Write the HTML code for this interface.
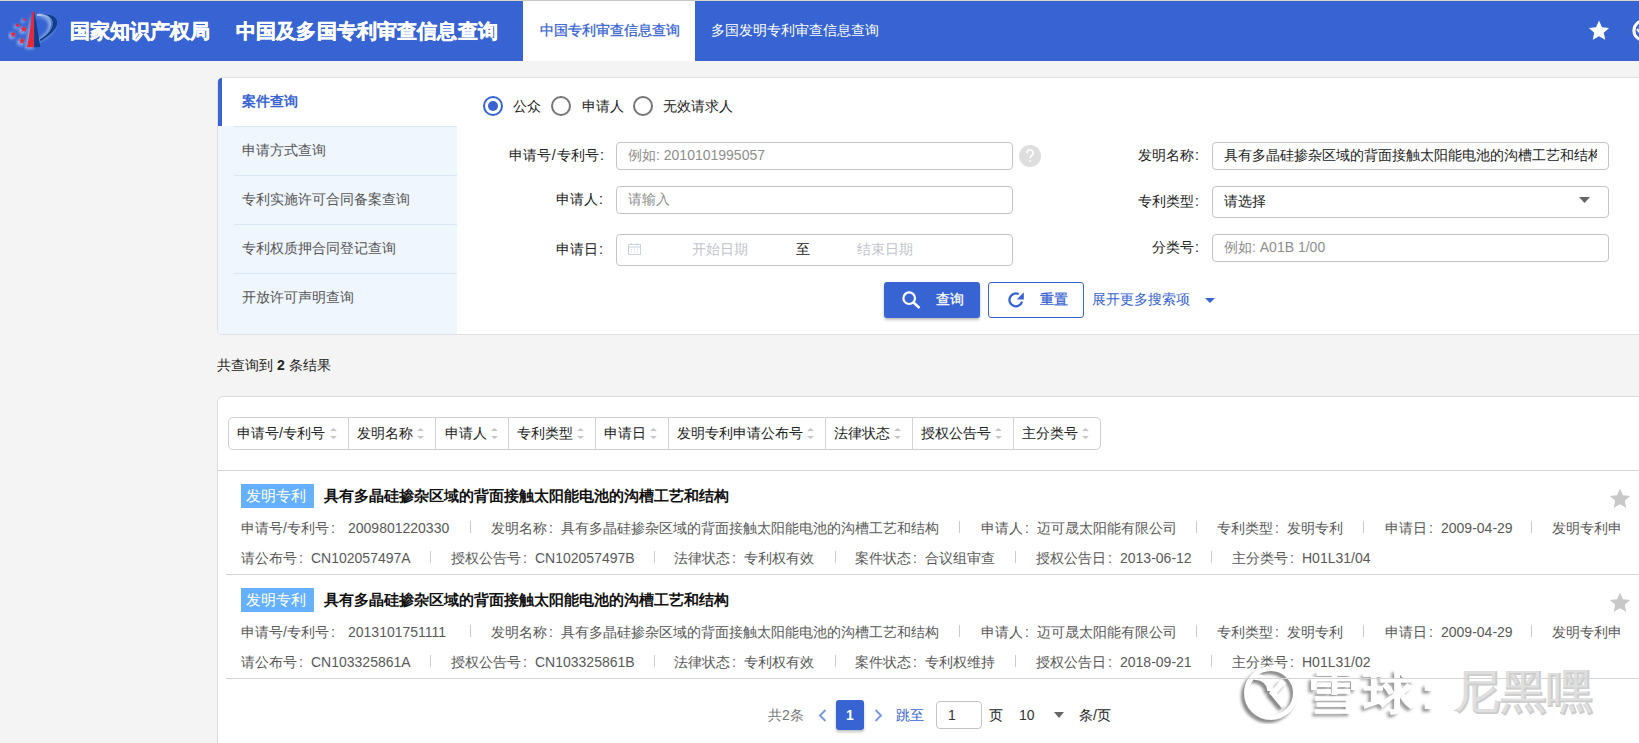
<!DOCTYPE html>
<html><head><meta charset="utf-8">
<style>
*{box-sizing:border-box;margin:0;padding:0}
html,body{width:1639px;height:743px;overflow:hidden}
body{position:relative;background:#f4f4f4;font-family:"Liberation Sans",sans-serif;color:#333;font-size:14px}
.a{position:absolute;white-space:nowrap}
.topline{left:0;top:0;width:1639px;height:1px;background:#d9d5cb}
.hdr{left:0;top:1px;width:1639px;height:60px;background:#3764d2}
.htitle{color:#fff;font-size:20px;font-weight:bold;line-height:20px;-webkit-text-stroke:0.45px #fff}
.tab1{left:523px;top:1px;width:172px;height:60px;background:#fff}
.tabt{font-size:14px;line-height:20px}
.panel{left:217px;top:77px;width:1440px;height:258px;background:#fff;border:1px solid #e0e0e0;border-radius:5px;overflow:hidden}
.nav{left:0;top:48px;width:239px;height:222px;background:#eff6fe}
.navact{left:0;top:0;width:239px;height:48px;background:#fff}
.navbar{left:0;top:0;width:4px;height:48px;background:#3764d2}
.sep{height:1px;background:#d9e6f8}
.navt{font-size:14px;line-height:20px;color:#555}
.lbl{font-size:14px;line-height:20px;color:#222;text-align:right}
.inp{border:1px solid #c4c4c4;border-radius:4px;background:#fff}
.ph{font-size:14px;line-height:20px;color:#8e8e8e}
.radio{width:20px;height:20px;border-radius:50%;border:2px solid #757575}
.radio.on{border-color:#3764d2}
.radio.on:after{content:"";position:absolute;left:3px;top:3px;width:10px;height:10px;border-radius:50%;background:#3764d2}
.res{left:217px;top:396px;width:1440px;height:400px;background:#fff;border:1px solid #dcdcdc;border-radius:6px}
.sg{left:228px;top:417px;width:873px;height:33px;border:1px solid #cfcfcf;border-radius:5px;background:#fff}
.sd{top:418px;width:1px;height:31px;background:#d4d4d4}
.st{top:423px;font-size:14px;line-height:20px;color:#222}
.tag{width:73px;height:24px;background:#66b1ff;color:#fff;font-size:15px;line-height:24px;padding-left:5px}
.ttl{font-size:15px;font-weight:bold;line-height:20px;color:#111}
.info{font-size:14px;line-height:20px;color:#595959}
.vs{width:1px;height:12px;background:#cacaca}
.hl{height:1px;background:#d4d4d4;z-index:2}
.wm{top:664px;font-size:46px;transform:scaleX(1.12);transform-origin:0 0;line-height:56px;color:#fff;font-weight:bold;-webkit-text-stroke:0.6px #fff;text-shadow:-3px 3px 3px rgba(0,0,0,.42)}
.wm2{top:664px;font-size:46px;line-height:56px;color:#cdcdcd;font-weight:bold;-webkit-text-stroke:0.5px #cdcdcd}
.wm3{top:663px;font-size:46px;line-height:56px;color:rgba(255,255,255,.4);font-weight:normal}
.c{font-style:normal;display:inline-block;width:14px;padding-left:2px}
</style></head>
<body>
<div class="a topline"></div>
<div class="a" style="left:523px;top:0;width:172px;height:1px;background:#c6c8c8"></div>
<div class="a hdr"></div>
<!-- logo -->
<svg class="a" style="left:8px;top:10px" width="54" height="42" viewBox="0 0 54 42">
  <defs><filter id="gl" x="-50%" y="-50%" width="200%" height="200%"><feGaussianBlur stdDeviation="1.4"/></filter>
  <linearGradient id="pg" x1="0" y1="0" x2="1" y2="0.3"><stop offset="0" stop-color="#b8cdf5"/><stop offset="0.55" stop-color="#8eaee8"/><stop offset="1" stop-color="#0f3d8a"/></linearGradient></defs>
  <g opacity="0.75" filter="url(#gl)" fill="#a9c4f6" transform="translate(-1.5,1.5)">
    <path d="M24.5 2 L27 37.5 L18.5 37.5 Z"/>
    <path d="M28 5 C40 2 52 8 48 17 C45 24 37 28 32 31 L31 28 C36 25 42 20 42 14 C42 8 36 5 29 6 Z"/>
    <circle cx="16.4" cy="9.5" r="2"/><circle cx="9.4" cy="15.3" r="2.3"/><circle cx="15.8" cy="18.9" r="3.5"/><circle cx="5.2" cy="24.3" r="3.2"/><circle cx="14" cy="30.7" r="3.5"/>
  </g>
  <path d="M28.2 4.2 C38 2.5 50 5.5 49 13.5 C48 21 39 27 32.5 31.5 L31.6 29 C36 26 42.5 21 43 14.5 C43.5 8.5 37 5.3 29.5 6 Z" fill="url(#pg)"/>
  <path d="M32.5 31.5 C39 27 48 21 49 13.5 C50 6 41 3.5 33 4 C41 5 46 9 45 15 C44 21 37 26.5 32 29 Z" fill="#0f3d8a"/>
  <path d="M24.3 1.8 L26.3 1.8 L26.1 37.3 L19 37.3 C21.5 25 23 12 24.3 1.8 Z" fill="#e5293b"/>
  <path d="M26.3 1.5 C28.3 12 30.5 25 32.2 37 L26.1 37.3 Z" fill="#0f3d8a"/>
  <g fill="#e5293b">
    <circle cx="16.4" cy="9.5" r="1.3"/>
    <circle cx="9.4" cy="15.3" r="1.7"/>
    <path d="M15.8 15.3 l1.05 2.35 2.55 .25 -1.95 1.7 .6 2.5 -2.25 -1.35 -2.25 1.35 .6 -2.5 -1.95 -1.7 2.55 -.25z"/>
    <path d="M5.2 21.2 l.9 2.05 2.25 .2 -1.7 1.5 .5 2.2 -1.95 -1.15 -1.95 1.15 .5 -2.2 -1.7 -1.5 2.25 -.2z"/>
    <path d="M14 27.3 l1 2.2 2.4 .22 -1.8 1.6 .55 2.35 -2.15 -1.25 -2.15 1.25 .55 -2.35 -1.8 -1.6 2.4 -.22z"/>
  </g>
</svg>
<div class="a htitle" style="left:70px;top:21px">国家知识产权局</div>
<div class="a htitle" style="left:236px;top:21px;letter-spacing:.15px">中国及多国专利审查信息查询</div>
<div class="a tab1"></div>
<div class="a tabt" style="left:540px;top:20px;color:#3764d2;-webkit-text-stroke:0.3px #3764d2">中国专利审查信息查询</div>
<div class="a tabt" style="left:711px;top:20px;color:#fff">多国发明专利审查信息查询</div>
<svg class="a" style="left:1588px;top:20px" width="22" height="21" viewBox="0 0 22 21"><path d="M11.00 0.60 L13.94 7.15 L21.08 7.92 L15.76 12.75 L17.23 19.78 L11.00 16.20 L4.77 19.78 L6.24 12.75 L0.92 7.92 L8.06 7.15 Z" fill="#fff"/></svg>
<svg class="a" style="left:1632px;top:19px" width="7" height="23" viewBox="0 0 7 23"><circle cx="11.5" cy="11.5" r="9.6" fill="none" stroke="#fff" stroke-width="3"/><path d="M5 10 L9 15" stroke="#fff" stroke-width="2.2" fill="none"/></svg>

<!-- search panel -->
<div class="a panel">
  <div class="a nav"></div>
  <div class="a navact"></div>
  <div class="a navbar"></div>
  <div class="a sep" style="left:16px;top:48px;width:223px"></div>
  <div class="a sep" style="left:16px;top:97px;width:223px"></div>
  <div class="a sep" style="left:16px;top:146px;width:223px"></div>
  <div class="a sep" style="left:16px;top:195px;width:223px"></div>
</div>
<div class="a navt" style="left:242px;top:91px;color:#3764d2;font-weight:bold">案件查询</div>
<div class="a navt" style="left:242px;top:140px">申请方式查询</div>
<div class="a navt" style="left:242px;top:189px">专利实施许可合同备案查询</div>
<div class="a navt" style="left:242px;top:238px">专利权质押合同登记查询</div>
<div class="a navt" style="left:242px;top:287px">开放许可声明查询</div>

<div class="a radio on" style="left:483px;top:96px"></div>
<div class="a lbl" style="left:513px;top:96px">公众</div>
<div class="a radio" style="left:551px;top:96px"></div>
<div class="a lbl" style="left:582px;top:96px">申请人</div>
<div class="a radio" style="left:633px;top:96px"></div>
<div class="a lbl" style="left:663px;top:96px">无效请求人</div>

<div class="a lbl" style="left:483px;width:121px;top:145px">申请号<span style="margin:0 1px">/</span>专利号<span style="margin-left:1.5px">:</span></div>
<div class="a inp" style="left:616px;top:142px;width:397px;height:28px"></div>
<div class="a ph" style="left:628px;top:145px">例如: 2010101995057</div>
<svg class="a" style="left:1019px;top:145px" width="22" height="22" viewBox="0 0 22 22"><circle cx="11" cy="11" r="11" fill="#dedede"/><path d="M7.8 8.2 C7.8 6.2 9.3 5 11 5 C12.8 5 14.2 6.2 14.2 7.9 C14.2 10.3 11.2 10.4 11.2 13.2" stroke="#fff" stroke-width="1.6" fill="none"/><circle cx="11.2" cy="16" r="1" fill="#fff"/></svg>

<div class="a lbl" style="left:503px;width:100px;top:189px">申请人<span style="margin-left:1.5px">:</span></div>
<div class="a inp" style="left:616px;top:186px;width:397px;height:28px"></div>
<div class="a ph" style="left:628px;top:189px">请输入</div>

<div class="a lbl" style="left:503px;width:100px;top:239px">申请日<span style="margin-left:1.5px">:</span></div>
<div class="a inp" style="left:616px;top:234px;width:397px;height:32px"></div>
<svg class="a" style="left:628px;top:243px" width="13" height="12" viewBox="0 0 13 12"><rect x="0.5" y="1.5" width="12" height="10" fill="none" stroke="#c9d3e3"/><line x1="0.5" y1="4" x2="12.5" y2="4" stroke="#c9d3e3"/><path d="M3 6.5h1M6 6.5h1M9 6.5h1M3 9h1M6 9h1M9 9h1" stroke="#c9d3e3"/><path d="M3.5 0v2M9.5 0v2" stroke="#c9d3e3"/></svg>
<div class="a ph" style="left:692px;top:239px;color:#c0c4cc">开始日期</div>
<div class="a lbl" style="left:796px;top:239px">至</div>
<div class="a ph" style="left:857px;top:239px;color:#c0c4cc">结束日期</div>

<div class="a lbl" style="left:1099px;width:100px;top:145px">发明名称<span style="margin-left:1.5px">:</span></div>
<div class="a inp" style="left:1212px;top:142px;width:397px;height:28px;overflow:hidden"><div class="a" style="left:11px;top:2px;line-height:20px;font-size:14px;color:#222;width:373px;overflow:hidden">具有多晶硅掺杂区域的背面接触太阳能电池的沟槽工艺和结构</div></div>
<div class="a lbl" style="left:1099px;width:100px;top:191px">专利类型<span style="margin-left:1.5px">:</span></div>
<div class="a inp" style="left:1212px;top:186px;width:397px;height:32px"></div>
<div class="a lbl" style="left:1224px;top:191px;color:#222">请选择</div>
<svg class="a" style="left:1579px;top:197px" width="11" height="6" viewBox="0 0 11 6"><path d="M0 0 L11 0 L5.5 6 Z" fill="#666"/></svg>
<div class="a lbl" style="left:1099px;width:100px;top:237px">分类号<span style="margin-left:1.5px">:</span></div>
<div class="a inp" style="left:1212px;top:234px;width:397px;height:28px"></div>
<div class="a ph" style="left:1224px;top:237px">例如: A01B 1/00</div>

<div class="a" style="left:884px;top:282px;width:96px;height:36px;background:#3764d2;border-radius:3px;box-shadow:0 2px 3px rgba(0,0,0,.25)"></div>
<svg class="a" style="left:902px;top:291px" width="20" height="18" viewBox="0 0 20 18"><circle cx="7.2" cy="7.2" r="5.8" fill="none" stroke="#fff" stroke-width="2.2"/><path d="M11.5 11.5 L17.5 17" stroke="#fff" stroke-width="2.4"/></svg>
<div class="a tabt" style="left:936px;top:289px;color:#fff;-webkit-text-stroke:0.3px #fff">查询</div>
<div class="a" style="left:988px;top:282px;width:96px;height:36px;background:#fff;border:1px solid #3764d2;border-radius:3px"></div>
<svg class="a" style="left:1007px;top:291px" width="18" height="18" viewBox="0 0 18 18"><path d="M11.6 3.1 A6.4 6.4 0 1 0 15.0 10.7" fill="none" stroke="#3764d2" stroke-width="2.3"/><path d="M9.8 8.4 L16.8 1.2 L16.8 8.4 Z" fill="#3764d2"/></svg>
<div class="a tabt" style="left:1040px;top:289px;color:#3764d2;-webkit-text-stroke:0.3px #3764d2">重置</div>
<div class="a tabt" style="left:1092px;top:289px;color:#3764d2">展开更多搜索项</div>
<svg class="a" style="left:1205px;top:298px" width="10" height="5" viewBox="0 0 10 5"><path d="M0 0 L10 0 L5 5 Z" fill="#3764d2"/></svg>

<div class="a tabt" style="left:217px;top:355px;color:#222">共查询到 <b>2</b> 条结果</div>

<!-- results -->
<div class="a res"></div>
<div class="a sg"></div>
<div class="a sd" style="left:348px"></div>
<div class="a sd" style="left:435px"></div>
<div class="a sd" style="left:508px"></div>
<div class="a sd" style="left:595px"></div>
<div class="a sd" style="left:668px"></div>
<div class="a sd" style="left:825px"></div>
<div class="a sd" style="left:912px"></div>
<div class="a sd" style="left:1013px"></div>
<div class="a st" style="left:237px">申请号/专利号</div>
<div class="a st" style="left:357px">发明名称</div>
<div class="a st" style="left:445px">申请人</div>
<div class="a st" style="left:517px">专利类型</div>
<div class="a st" style="left:604px">申请日</div>
<div class="a st" style="left:677px">发明专利申请公布号</div>
<div class="a st" style="left:834px">法律状态</div>
<div class="a st" style="left:921px">授权公告号</div>
<div class="a st" style="left:1022px">主分类号</div>
<div class="a hl" style="left:218px;top:470px;width:1421px"></div>

<div class="a tag" style="left:241px;top:484px">发明专利</div>
<div class="a ttl" style="left:324px;top:486px">具有多晶硅掺杂区域的背面接触太阳能电池的沟槽工艺和结构</div>
<div class="a hl" style="left:226px;top:574px;width:1413px"></div>

<div class="a tag" style="left:241px;top:588px">发明专利</div>
<div class="a ttl" style="left:324px;top:590px">具有多晶硅掺杂区域的背面接触太阳能电池的沟槽工艺和结构</div>
<div class="a hl" style="left:226px;top:678px;width:1413px"></div>

<svg class="a" style="left:330px;top:427px" width="7" height="12" viewBox="0 0 7 12"><path d="M3.5 1 L7 4 L0 4 Z M0 9 L7 9 L3.5 12 Z" fill="#c6c6c6"/></svg>
<svg class="a" style="left:417px;top:427px" width="7" height="12" viewBox="0 0 7 12"><path d="M3.5 1 L7 4 L0 4 Z M0 9 L7 9 L3.5 12 Z" fill="#c6c6c6"/></svg>
<svg class="a" style="left:491px;top:427px" width="7" height="12" viewBox="0 0 7 12"><path d="M3.5 1 L7 4 L0 4 Z M0 9 L7 9 L3.5 12 Z" fill="#c6c6c6"/></svg>
<svg class="a" style="left:577px;top:427px" width="7" height="12" viewBox="0 0 7 12"><path d="M3.5 1 L7 4 L0 4 Z M0 9 L7 9 L3.5 12 Z" fill="#c6c6c6"/></svg>
<svg class="a" style="left:650px;top:427px" width="7" height="12" viewBox="0 0 7 12"><path d="M3.5 1 L7 4 L0 4 Z M0 9 L7 9 L3.5 12 Z" fill="#c6c6c6"/></svg>
<svg class="a" style="left:807px;top:427px" width="7" height="12" viewBox="0 0 7 12"><path d="M3.5 1 L7 4 L0 4 Z M0 9 L7 9 L3.5 12 Z" fill="#c6c6c6"/></svg>
<svg class="a" style="left:894px;top:427px" width="7" height="12" viewBox="0 0 7 12"><path d="M3.5 1 L7 4 L0 4 Z M0 9 L7 9 L3.5 12 Z" fill="#c6c6c6"/></svg>
<svg class="a" style="left:995px;top:427px" width="7" height="12" viewBox="0 0 7 12"><path d="M3.5 1 L7 4 L0 4 Z M0 9 L7 9 L3.5 12 Z" fill="#c6c6c6"/></svg>
<svg class="a" style="left:1082px;top:427px" width="7" height="12" viewBox="0 0 7 12"><path d="M3.5 1 L7 4 L0 4 Z M0 9 L7 9 L3.5 12 Z" fill="#c6c6c6"/></svg>
<div class="a info" style="left:241px;top:518px">申请号/专利号<i class="c">:</i></div>
<div class="a info" style="left:348px;top:518px">2009801220330</div>
<div class="a info" style="left:491px;top:518px">发明名称<i class="c">:</i>具有多晶硅掺杂区域的背面接触太阳能电池的沟槽工艺和结构</div>
<div class="a info" style="left:981px;top:518px">申请人<i class="c">:</i>迈可晟太阳能有限公司</div>
<div class="a info" style="left:1217px;top:518px">专利类型<i class="c">:</i>发明专利</div>
<div class="a info" style="left:1385px;top:518px">申请日<i class="c">:</i>2009-04-29</div>
<div class="a info" style="left:1552px;top:518px">发明专利申</div>
<div class="a vs" style="left:470px;top:521px"></div>
<div class="a vs" style="left:959px;top:521px"></div>
<div class="a vs" style="left:1196px;top:521px"></div>
<div class="a vs" style="left:1363px;top:521px"></div>
<div class="a vs" style="left:1531px;top:521px"></div>
<div class="a info" style="left:241px;top:548px">请公布号<i class="c">:</i>CN102057497A</div>
<div class="a info" style="left:451px;top:548px">授权公告号<i class="c">:</i>CN102057497B</div>
<div class="a info" style="left:674px;top:548px">法律状态<i class="c">:</i>专利权有效</div>
<div class="a info" style="left:855px;top:548px">案件状态<i class="c">:</i>合议组审查</div>
<div class="a info" style="left:1036px;top:548px">授权公告日<i class="c">:</i>2013-06-12</div>
<div class="a info" style="left:1232px;top:548px">主分类号<i class="c">:</i>H01L31/04</div>
<div class="a vs" style="left:430px;top:551px"></div>
<div class="a vs" style="left:654px;top:551px"></div>
<div class="a vs" style="left:835px;top:551px"></div>
<div class="a vs" style="left:1015px;top:551px"></div>
<div class="a vs" style="left:1211px;top:551px"></div>
<svg class="a" style="left:1609px;top:488px" width="22" height="21" viewBox="0 0 22 21"><path d="M11.00 0.60 L13.94 7.15 L21.08 7.92 L15.76 12.75 L17.23 19.78 L11.00 16.20 L4.77 19.78 L6.24 12.75 L0.92 7.92 L8.06 7.15 Z" fill="#c8c8c8"/></svg>
<div class="a info" style="left:241px;top:622px">申请号/专利号<i class="c">:</i></div>
<div class="a info" style="left:348px;top:622px">2013101751111</div>
<div class="a info" style="left:491px;top:622px">发明名称<i class="c">:</i>具有多晶硅掺杂区域的背面接触太阳能电池的沟槽工艺和结构</div>
<div class="a info" style="left:981px;top:622px">申请人<i class="c">:</i>迈可晟太阳能有限公司</div>
<div class="a info" style="left:1217px;top:622px">专利类型<i class="c">:</i>发明专利</div>
<div class="a info" style="left:1385px;top:622px">申请日<i class="c">:</i>2009-04-29</div>
<div class="a info" style="left:1552px;top:622px">发明专利申</div>
<div class="a vs" style="left:470px;top:625px"></div>
<div class="a vs" style="left:959px;top:625px"></div>
<div class="a vs" style="left:1196px;top:625px"></div>
<div class="a vs" style="left:1363px;top:625px"></div>
<div class="a vs" style="left:1531px;top:625px"></div>
<div class="a info" style="left:241px;top:652px">请公布号<i class="c">:</i>CN103325861A</div>
<div class="a info" style="left:451px;top:652px">授权公告号<i class="c">:</i>CN103325861B</div>
<div class="a info" style="left:674px;top:652px">法律状态<i class="c">:</i>专利权有效</div>
<div class="a info" style="left:855px;top:652px">案件状态<i class="c">:</i>专利权维持</div>
<div class="a info" style="left:1036px;top:652px">授权公告日<i class="c">:</i>2018-09-21</div>
<div class="a info" style="left:1232px;top:652px">主分类号<i class="c">:</i>H01L31/02</div>
<div class="a vs" style="left:430px;top:655px"></div>
<div class="a vs" style="left:654px;top:655px"></div>
<div class="a vs" style="left:835px;top:655px"></div>
<div class="a vs" style="left:1015px;top:655px"></div>
<div class="a vs" style="left:1211px;top:655px"></div>
<svg class="a" style="left:1609px;top:592px" width="22" height="21" viewBox="0 0 22 21"><path d="M11.00 0.60 L13.94 7.15 L21.08 7.92 L15.76 12.75 L17.23 19.78 L11.00 16.20 L4.77 19.78 L6.24 12.75 L0.92 7.92 L8.06 7.15 Z" fill="#c8c8c8"/></svg>
<!-- pagination -->
<div class="a" style="left:768px;top:705px;font-size:14px;line-height:20px;color:#777">共2条</div>
<svg class="a" style="left:818px;top:709px" width="9" height="13" viewBox="0 0 9 13"><path d="M7.5 1 L2 6.5 L7.5 12" fill="none" stroke="#7a9be0" stroke-width="2"/></svg>
<div class="a" style="left:836px;top:700px;width:28px;height:30px;background:#3764d2;border-radius:3px;box-shadow:0 2px 3px rgba(0,0,0,.25);color:#fff;font-weight:bold;font-size:14px;line-height:30px;text-align:center">1</div>
<svg class="a" style="left:874px;top:709px" width="9" height="13" viewBox="0 0 9 13"><path d="M1.5 1 L7 6.5 L1.5 12" fill="none" stroke="#7a9be0" stroke-width="2"/></svg>
<div class="a" style="left:896px;top:705px;font-size:14px;line-height:20px;color:#3764d2">跳至</div>
<div class="a inp" style="left:936px;top:701px;width:46px;height:28px"></div>
<div class="a" style="left:948px;top:705px;font-size:14px;line-height:20px;color:#333">1</div>
<div class="a" style="left:989px;top:705px;font-size:14px;line-height:20px;color:#222">页</div>
<div class="a" style="left:1019px;top:705px;font-size:14px;line-height:20px;color:#333">10</div>
<svg class="a" style="left:1054px;top:712px" width="10" height="6" viewBox="0 0 10 6"><path d="M0 0 L10 0 L5 6 Z" fill="#666"/></svg>
<div class="a" style="left:1079px;top:705px;font-size:14px;line-height:20px;color:#222">条/页</div>

<!-- watermark -->
<svg class="a" style="left:1232px;top:662px" width="70" height="62" viewBox="-5 -2 70 62">
<defs><filter id="ws" x="-30%" y="-30%" width="160%" height="160%"><feGaussianBlur stdDeviation="1.6"/></filter></defs>
<g transform="translate(-3,3)" filter="url(#ws)" opacity="0.65" stroke="#444" fill="none">
<circle cx="34" cy="29" r="24.5" stroke-width="5"/><path d="M17 13 C26 12 34 19 33 27" stroke-width="6"/><path d="M47 17 L36 29 L47 42" stroke-width="6"/></g>
<g stroke="#fff" fill="none">
<circle cx="34" cy="29" r="24.5" stroke-width="5"/><path d="M17 13 C26 12 34 19 33 27" stroke-width="6"/><path d="M47 17 L36 29 L47 42" stroke-width="6"/></g>
</svg>
<div class="a wm" style="left:1307px">雪</div>
<div class="a wm" style="left:1364px">球</div>
<div class="a wm" style="left:1403px">：</div>
<div class="a wm2" style="left:1455px">尼</div>
<div class="a wm2" style="left:1501px">黑</div>
<div class="a wm2" style="left:1547px">嘿</div>
<div class="a wm3" style="left:1454px">尼</div>
<div class="a wm3" style="left:1500px">黑</div>
<div class="a wm3" style="left:1546px">嘿</div>
</body></html>
